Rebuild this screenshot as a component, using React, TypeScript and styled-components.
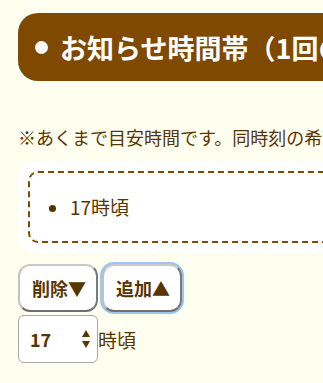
import React from "react"
import styled, { createGlobalStyle } from "styled-components"

const brown = "#7f4a00"
const ink = "#573400"

const GlobalStyle = createGlobalStyle`
  html, body {
    margin: 0;
    padding: 0;
    overflow: hidden;
    background: #fffff0;
  }
  body {
    font-family: "Noto Sans CJK JP", "Noto Sans", sans-serif;
    color: ${ink};
  }
`

const Page = styled.div`
  width: 760px;
  padding: 13px 18px 20px;
`

const Heading = styled.h2`
  margin: 0;
  height: 68px;
  display: flex;
  align-items: center;
  padding-left: 17px;
  border-radius: 20px;
  background: ${brown};
  color: #fff;
  font-size: 27px;
  font-weight: 700;
  white-space: nowrap;
`

const Dot = styled.span`
  width: 13px;
  height: 13px;
  margin-right: 12px;
  border-radius: 50%;
  background: #fff;
  flex: none;
`

const Note = styled.p`
  margin: 43px 0 0;
  font-size: 18px;
  line-height: 26px;
  white-space: nowrap;
`

const Panel = styled.div`
  margin-top: 11px;
  padding: 10px;
  border-radius: 16px;
  background: #fff;
`

const Dashed = styled.div`
  border: 2px dashed ${brown};
  border-radius: 10px;
`

const List = styled.ul`
  margin: 0;
  padding: 21px 0 21px 40px;
  font-size: 19px;
  line-height: 26px;
`

const Controls = styled.div`
  margin-top: 11px;
  display: flex;
  gap: 4px;
`

const Button = styled.button<{ $focused?: boolean }>`
  height: 48px;
  padding: 0 10px 0 12px;
  border-radius: 12px;
  border: 2px solid;
  border-color: #c9c9c9 #7a7a7a #6f6f6f #c2c2c2;
  background: #fff;
  color: ${ink};
  font-family: inherit;
  font-size: 18px;
  font-weight: 700;
  cursor: pointer;
  box-shadow: ${(p) => (p.$focused ? "0 0 0 2px #9fc5ee" : "none")};
`

const Row = styled.div`
  margin-top: 3px;
  display: flex;
  align-items: center;
`

const NumberBox = styled.div`
  width: 80px;
  height: 48px;
  box-sizing: border-box;
  display: flex;
  align-items: center;
  padding: 0 7px 0 9px;
  border: 1px solid #a8a8a8;
  border-radius: 6px;
  background: #fff;
`

const NumberInput = styled.input`
  flex: 1;
  min-width: 0;
  border: none;
  outline: none;
  background: transparent;
  color: ${ink};
  font-family: inherit;
  font-size: 18px;
  font-weight: 700;
  -moz-appearance: textfield;
  &::-webkit-inner-spin-button,
  &::-webkit-outer-spin-button {
    -webkit-appearance: none;
    margin: 0;
  }
`

const Unit = styled.span`
  font-size: 19px;
`

function Spinner() {
  return (
    <svg width="8" height="18" viewBox="0 0 8 18">
      <path d="M4 0 L8 7 L0 7 Z" fill={ink} />
      <path d="M0 11 L8 11 L4 18 Z" fill={ink} />
    </svg>
  )
}

export default function App() {
  const [hour, setHour] = React.useState(17)
  return (
    <>
      <GlobalStyle />
      <Page>
        <Heading>
          <Dot />
          お知らせ時間帯（1回のみ）
        </Heading>
        <Note>※あくまで目安時間です。同時刻の希望が多い場合は前後する場合があります。</Note>
        <Panel>
          <Dashed>
            <List>
              <li>{hour}時頃</li>
            </List>
          </Dashed>
        </Panel>
        <Controls>
          <Button>削除▼</Button>
          <Button $focused>追加▲</Button>
        </Controls>
        <Row>
          <NumberBox>
            <NumberInput
              type="number"
              value={hour}
              min={0}
              max={23}
              onChange={(e) => setHour(Number(e.target.value))}
            />
            <Spinner />
          </NumberBox>
          <Unit>時頃</Unit>
        </Row>
      </Page>
    </>
  )
}
